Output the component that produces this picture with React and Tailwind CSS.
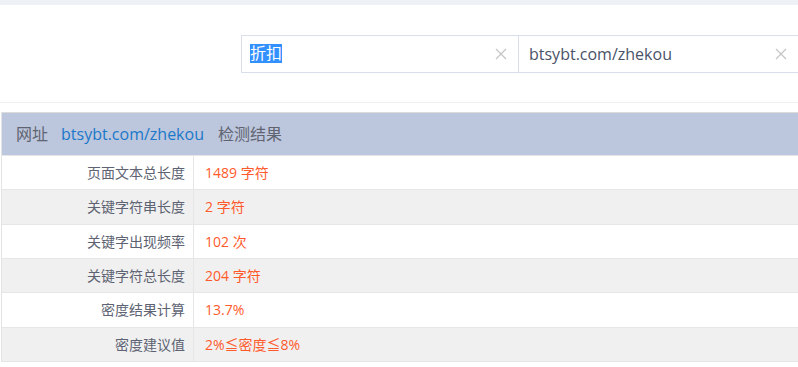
import React from 'react';

const rows = [
  { label: '页面文本总长度', value: '1489 字符' },
  { label: '关键字符串长度', value: '2 字符' },
  { label: '关键字出现频率', value: '102 次' },
  { label: '关键字符总长度', value: '204 字符' },
  { label: '密度结果计算', value: '13.7%' },
  { label: '密度建议值', value: '2%≦密度≦8%' },
];

const ClearIcon = () => (
  <svg width="12" height="12" viewBox="0 0 12 12" className="shrink-0">
    <path d="M1 1L11 11M11 1L1 11" stroke="#c4c4c4" strokeWidth="1.2" fill="none" />
  </svg>
);

const App = () => {
  return (
    <div
      className="w-[798px] h-[367px] overflow-hidden bg-white"
      style={{ fontFamily: '"Open Sans", "Noto Sans CJK SC", sans-serif' }}
    >
      <div className="h-[5px] bg-[#eef2f6]" />

      {/* search inputs */}
      <div className="h-[98px] flex items-center border-b border-[#f0f0f0]">
        <div className="ml-[241px] flex h-[38px] border border-[#d8deea]">
          <div className="w-[277px] flex items-center justify-between pl-[8px] pr-[11px] border-r border-[#d8deea]">
            <span className="text-[16px] leading-[19px] bg-[#3390ff] text-white">折扣</span>
            <ClearIcon />
          </div>
          <div className="w-[280px] flex items-center justify-between pl-[10px] pr-[12px]">
            <span className="text-[16px] text-[#4a5368]">btsybt.com/zhekou</span>
            <ClearIcon />
          </div>
        </div>
      </div>

      {/* result table */}
      <div className="mt-[9px] ml-px w-[800px] border-l border-[#e4e4e4]">
        <div className="h-[43px] flex items-center pl-[14px] bg-[#bcc6dd] border-t border-[#dcdcdc] text-[16px]">
          <span className="text-[#5f6470]">网址</span>
          <span className="ml-[13px] text-[#1b78c9]">btsybt.com/zhekou</span>
          <span className="ml-[14px] text-[#5f6470]">检测结果</span>
        </div>
        {rows.map((row, i) => (
          <div
            key={row.label}
            className={`h-[34.33px] flex text-[14px] border-t border-[#e6e6e6] ${i % 2 === 1 ? 'bg-[#f0f0f0]' : 'bg-white'}`}
          >
            <div className="w-[192px] flex items-center justify-end pr-[8px] border-r border-[#e6e6e6] text-[#5d6372]">
              {row.label}
            </div>
            <div className="flex-1 flex items-center pl-[11px] text-[#ff5a2b]">{row.value}</div>
          </div>
        ))}
        <div className="border-t border-[#e6e6e6]" />
      </div>
    </div>
  );
};

export default App;
